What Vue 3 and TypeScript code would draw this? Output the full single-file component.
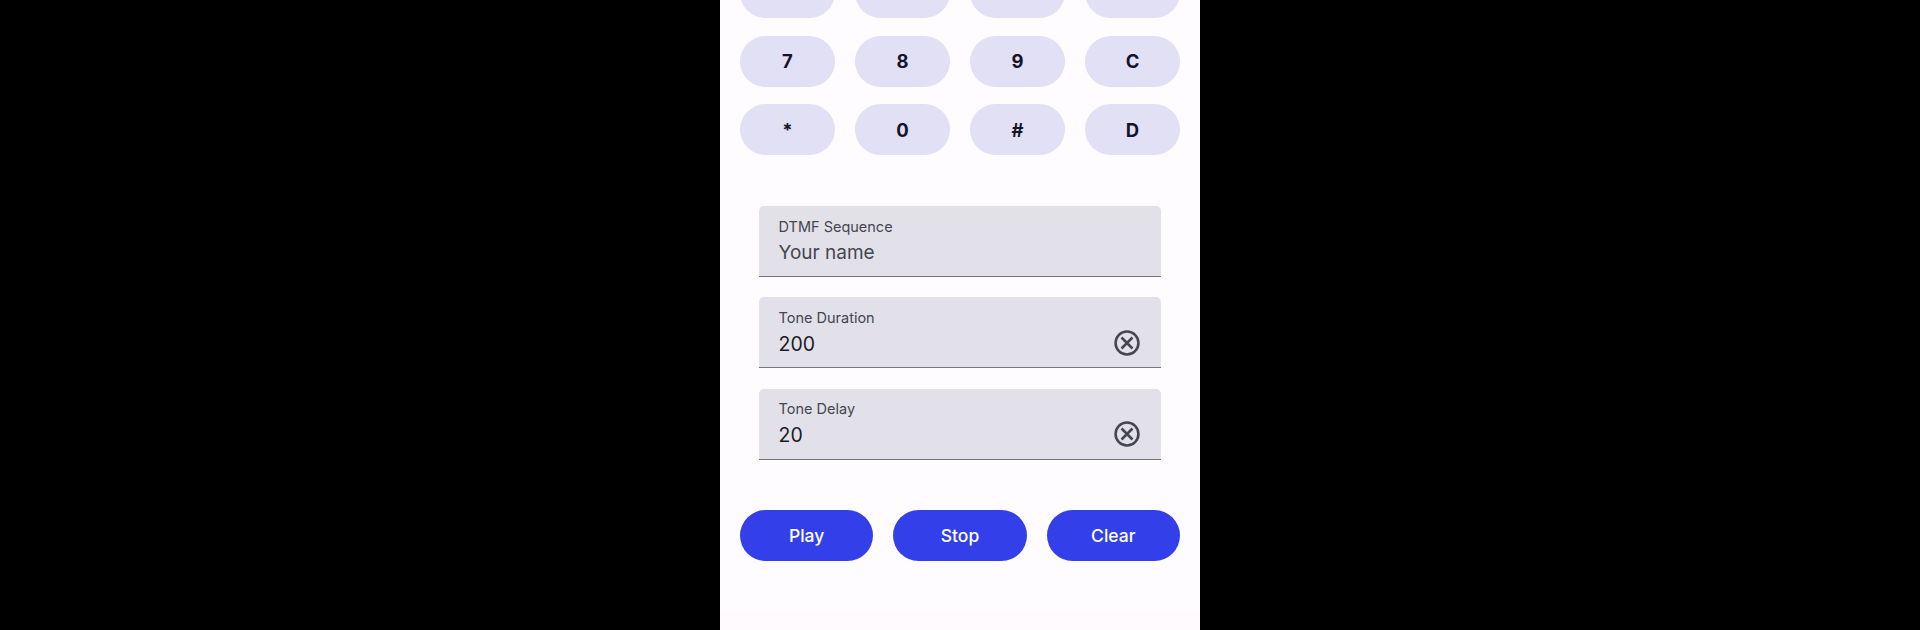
<script setup lang="ts">
const keys: string[] = ['4', '5', '6', 'B', '7', '8', '9', 'C', '*', '0', '#', 'D']
const fields = [
  { label: 'DTMF Sequence', value: 'Your name', placeholder: true, clear: false },
  { label: 'Tone Duration', value: '200', placeholder: false, clear: true },
  { label: 'Tone Delay', value: '20', placeholder: false, clear: true },
]
const actions: string[] = ['Play', 'Stop', 'Clear']
</script>

<template>
  <div class="stage">
    <main class="phone">
      <div class="content">
        <section class="keypad">
          <button v-for="k in keys" :key="k" class="key" type="button">{{ k }}</button>
        </section>
        <section class="fields">
          <div v-for="f in fields" :key="f.label" class="field">
            <div class="texts">
              <span class="label">{{ f.label }}</span>
              <span class="value" :class="{ placeholder: f.placeholder }">{{ f.value }}</span>
            </div>
            <svg v-if="f.clear" class="clear" viewBox="0 0 24 24" width="28" height="28" fill="none" stroke="#45464f" aria-hidden="true">
              <circle cx="12" cy="12" r="9.8" stroke-width="2.2" />
              <path d="M7.3 7.3 16.7 16.7M16.7 7.3 7.3 16.7" stroke-width="2.2" />
            </svg>
          </div>
        </section>
        <section class="actions">
          <button v-for="a in actions" :key="a" class="action" type="button">{{ a }}</button>
        </section>
      </div>
      <div class="nav-strip"></div>
    </main>
  </div>
</template>

<style scoped>
.stage {
  display: flex;
  justify-content: center;
  height: 630px;
  background: #000;
  overflow: hidden;
  font-family: Inter, "Liberation Sans", sans-serif;
}
.phone {
  width: 480px;
  height: 630px;
  background: #fefcff;
  display: flex;
  flex-direction: column;
  overflow: hidden;
}
.content {
  flex: 1;
  padding: 0 20px;
}
.nav-strip {
  height: 18px;
  background: #fefafe;
}
.keypad {
  display: grid;
  grid-template-columns: repeat(4, 1fr);
  column-gap: 20px;
  row-gap: 17.5px;
  margin-top: -33px;
}
.key {
  height: 51px;
  border: 0;
  border-radius: 26px;
  background: #e1e0f5;
  color: #14142b;
  font: 650 18.5px Inter, "Liberation Sans", sans-serif;
  padding: 0;
}
.fields {
  display: flex;
  flex-direction: column;
  gap: 20.4px;
  margin: 51px 19px 0;
}
.field {
  height: 71px;
  box-sizing: border-box;
  display: flex;
  align-items: center;
  justify-content: space-between;
  background: #e2e1ea;
  border-radius: 5px 5px 0 0;
  border-bottom: 1.5px solid #75757f;
  padding: 0 20px 0 19.5px;
}
.texts {
  display: flex;
  flex-direction: column;
  gap: 3px;
}
.label {
  font-size: 14.5px;
  line-height: 20px;
  color: #45464f;
}
.value {
  font-size: 19.5px;
  line-height: 26px;
  color: #1b1b1f;
}
.placeholder {
  font-size: 19px;
  color: #45464f;
}
.clear {
  margin-top: 21px;
}
.actions {
  display: grid;
  grid-template-columns: repeat(3, 1fr);
  column-gap: 20px;
  margin-top: 50.2px;
}
.action {
  height: 51px;
  border: 0;
  border-radius: 26px;
  background: #3340ea;
  color: #fff;
  font: 500 17.5px Inter, "Liberation Sans", sans-serif;
  padding: 1px 0 0;
}
</style>
